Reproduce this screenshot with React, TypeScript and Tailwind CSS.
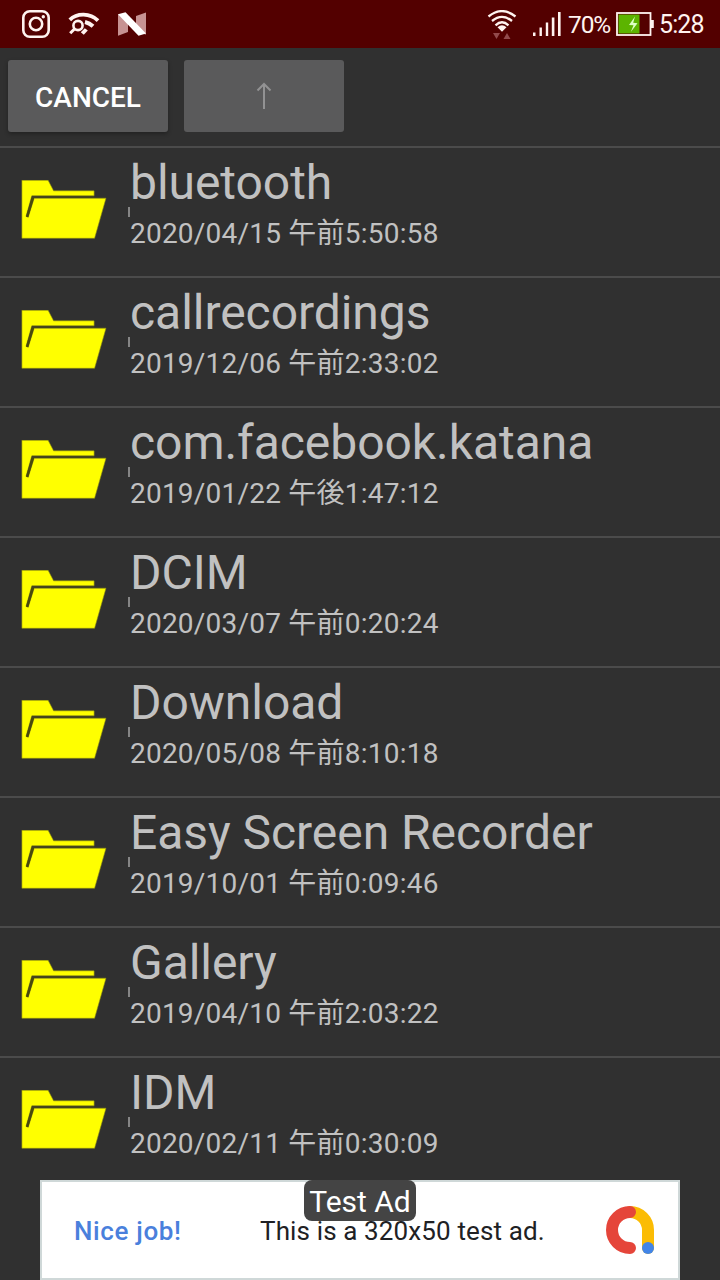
const folders = [
  { name: "bluetooth", date: "2020/04/15 午前5:50:58" },
  { name: "callrecordings", date: "2019/12/06 午前2:33:02" },
  { name: "com.facebook.katana", date: "2019/01/22 午後1:47:12" },
  { name: "DCIM", date: "2020/03/07 午前0:20:24" },
  { name: "Download", date: "2020/05/08 午前8:10:18" },
  { name: "Easy Screen Recorder", date: "2019/10/01 午前0:09:46" },
  { name: "Gallery", date: "2019/04/10 午前2:03:22" },
  { name: "IDM", date: "2020/02/11 午前0:30:09" },
];

function InstagramIcon() {
  return (
    <svg width="28" height="28" viewBox="0 0 28 28" fill="none" stroke="#fff3f0">
      <rect x="1.3" y="1.3" width="25.4" height="25.4" rx="6.5" strokeWidth="2.6" />
      <circle cx="14" cy="14" r="6.2" strokeWidth="2.6" />
      <circle cx="21.3" cy="6.7" r="1.7" fill="#fff3f0" stroke="none" />
    </svg>
  );
}

function WifiSearchIcon() {
  return (
    <svg width="32" height="24" viewBox="0 0 32 24" fill="none" stroke="#fff3f0">
      <path d="M1.8 7.8C9 .8 22 .8 30 8.6" strokeWidth="3.8" />
      <circle cx="10" cy="13.5" r="4.6" strokeWidth="2.6" />
      <path d="M6.7 16.8L2.2 21.3" strokeWidth="3" />
      <path d="M17 10Q21.5 11 25 14.3" strokeWidth="4" />
      <path d="M12.8 20.3l3 2.5 4-4.3-3-2.3z" fill="#fff3f0" stroke="none" />
    </svg>
  );
}

function NougatIcon() {
  return (
    <svg width="28" height="24" viewBox="0 0 28 24">
      <path d="M0 2.2L10 3v17L0 23.8zM28 .5v22L18 20V4z" fill="#c79292" />
      <path d="M0 2.2L7.5.3 28 21.5 20.5 23.8z" fill="#fff" />
    </svg>
  );
}

function WifiIcon() {
  return (
    <svg width="30" height="30" viewBox="0 0 30 30" fill="none" stroke="#fff3f0" strokeWidth="2.3">
      <path d="M1.5 6.5Q15-4.3 28.5 6.5M5 11Q15 2.8 25 11M8.5 15.3Q15 9.3 21.5 15.3" />
      <path d="M10.5 17.2Q15 13.4 19.5 17.2L15 21.8z" fill="#fff3f0" stroke="none" />
      <path d="M6 23h7l-3.5 6zM16.5 29h7L20 23z" fill="#93494b" stroke="none" />
    </svg>
  );
}

function SignalIcon() {
  return (
    <svg width="28" height="24" viewBox="0 0 28 24" fill="#fff3f0">
      <rect x="0" y="20.5" width="2.5" height="3.5" />
      <rect x="6.5" y="15.5" width="2.4" height="8.5" />
      <rect x="12.8" y="10.5" width="2.4" height="13.5" />
      <rect x="18.8" y="5.5" width="2.6" height="18.5" />
      <rect x="25" y="0" width="2.6" height="24" />
    </svg>
  );
}

function BatteryIcon() {
  return (
    <svg width="38" height="24" viewBox="0 0 38 24">
      <rect x="1" y="1" width="33.5" height="22" fill="none" stroke="#fff3f0" strokeWidth="1.8" />
      <rect x="2.5" y="2.5" width="21" height="19" fill="#5cb400" />
      <rect x="35" y="8" width="2.8" height="8" fill="#fff3f0" />
      <path d="M19 4.5l-6 8.5 4.5.3L14.8 20l6.7-8.8-4.3-.4z" fill="#dcffc4" />
    </svg>
  );
}

function FolderIcon() {
  return (
    <svg className="mt-8 ml-[21px] shrink-0" width="86" height="60" viewBox="0 0 86 60">
      <path
        d="M.9.2h26.2l5.5 10.6h40.5v5H10.8L5 36.4l2.2.8L13.2 18.2H85L73.6 58.3H.9z"
        fill="#ff0"
        stroke="#8a8a10"
        strokeWidth=".6"
      />
      <path d="M6.1 36.8L12 17.2" fill="none" stroke="#4a4a0a" strokeWidth="2.4" />
      <path d="M11 17h62.2" stroke="#45451c" strokeWidth="2" />
    </svg>
  );
}

function AdLogo() {
  return (
    <svg width="48" height="48" viewBox="0 0 48 48" fill="none" strokeWidth="12" strokeLinecap="round">
      <path d="M24 6a18 18 0 0 1 18 18v18" stroke="#fbbc04" />
      <path d="M24 6a18 18 0 0 0 0 36" stroke="#e5453a" />
      <circle cx="42" cy="42" r="6" fill="#4285e8" />
    </svg>
  );
}

function StatusBar() {
  return (
    <header className="flex h-12 shrink-0 items-center bg-[#530000] text-[25px] text-[#fff3f0]">
      <div className="ml-[22px]">
        <InstagramIcon />
      </div>
      <div className="ml-[18px]">
        <WifiSearchIcon />
      </div>
      <div className="ml-[18px]">
        <NougatIcon />
      </div>
      <div className="mt-0.5 ml-auto">
        <WifiIcon />
      </div>
      <div className="ml-4">
        <SignalIcon />
      </div>
      <span className="mt-0.5 ml-[7px] w-[43px] text-[24.5px] tracking-[-1.1px] whitespace-nowrap">70%</span>
      <div className="ml-[5px]">
        <BatteryIcon />
      </div>
      <span className="mt-0.5 mr-[15px] ml-[5px] w-[46px] tracking-[-0.9px] whitespace-nowrap">5:28</span>
    </header>
  );
}

function FolderRow({ name, date }: { name: string; date: string }) {
  return (
    <li className="flex h-[130px] shrink-0 border-t-2 border-[#4b4b4b]">
      <FolderIcon />
      <div className="ml-[21px] flex flex-col text-[#c1c1c1]">
        <span className="mt-[7px] ml-0.5 h-[52px] text-[48px] leading-[56px] tracking-[-0.05px] whitespace-nowrap">
          {name}
        </span>
        <span className="h-2.5 w-0.5 bg-[#858585]" />
        <span className="ml-0.5 h-[33px] text-[28px] leading-[33px] tracking-[0.22px] whitespace-nowrap">
          {date}
        </span>
      </div>
    </li>
  );
}

function AdBanner() {
  return (
    <div className="absolute bottom-0 left-10 flex h-[100px] w-[640px] items-center border-2 border-[#cfd8d8] bg-white text-[26px]">
      <span className="mt-0.5 ml-8 w-[186px] font-medium tracking-[0.65px] text-[#4a80dc]">Nice job!</span>
      <span className="mt-0.5 tracking-[0.13px] whitespace-nowrap text-[#202124]">This is a 320x50 test ad.</span>
      <div className="mr-6 ml-auto">
        <AdLogo />
      </div>
      <span className="absolute -top-0.5 left-[262px] h-[41px] w-28 rounded-lg bg-[#444] text-center text-[30px] leading-[44px] whitespace-nowrap text-white">
        Test Ad
      </span>
    </div>
  );
}

export default function App() {
  return (
    <div className="relative flex h-[1280px] w-[720px] flex-col overflow-hidden bg-[#303030] font-['Roboto','Noto_Sans_CJK_JP',sans-serif]">
      <StatusBar />
      <div className="flex h-[98px] shrink-0 gap-4 px-2 pt-3">
        <button className="h-[72px] w-40 rounded-[3px] bg-[#5a5a5b] pt-1 text-[28px] font-medium text-white shadow-[0_2px_4px_rgba(0,0,0,0.3)]">
          CANCEL
        </button>
        <button className="grid h-[72px] w-40 place-items-center rounded-[3px] bg-[#5a5a5b]">
          <svg width="16" height="28" viewBox="0 0 16 28" fill="none" stroke="#929293" strokeWidth="2">
            <path d="M8 27V2M1.5 8.5L8 2l6.5 6.5" />
          </svg>
        </button>
      </div>
      <ul className="flex flex-1 flex-col overflow-hidden">
        {folders.map((folder) => (
          <FolderRow key={folder.name} {...folder} />
        ))}
      </ul>
      <AdBanner />
    </div>
  );
}
